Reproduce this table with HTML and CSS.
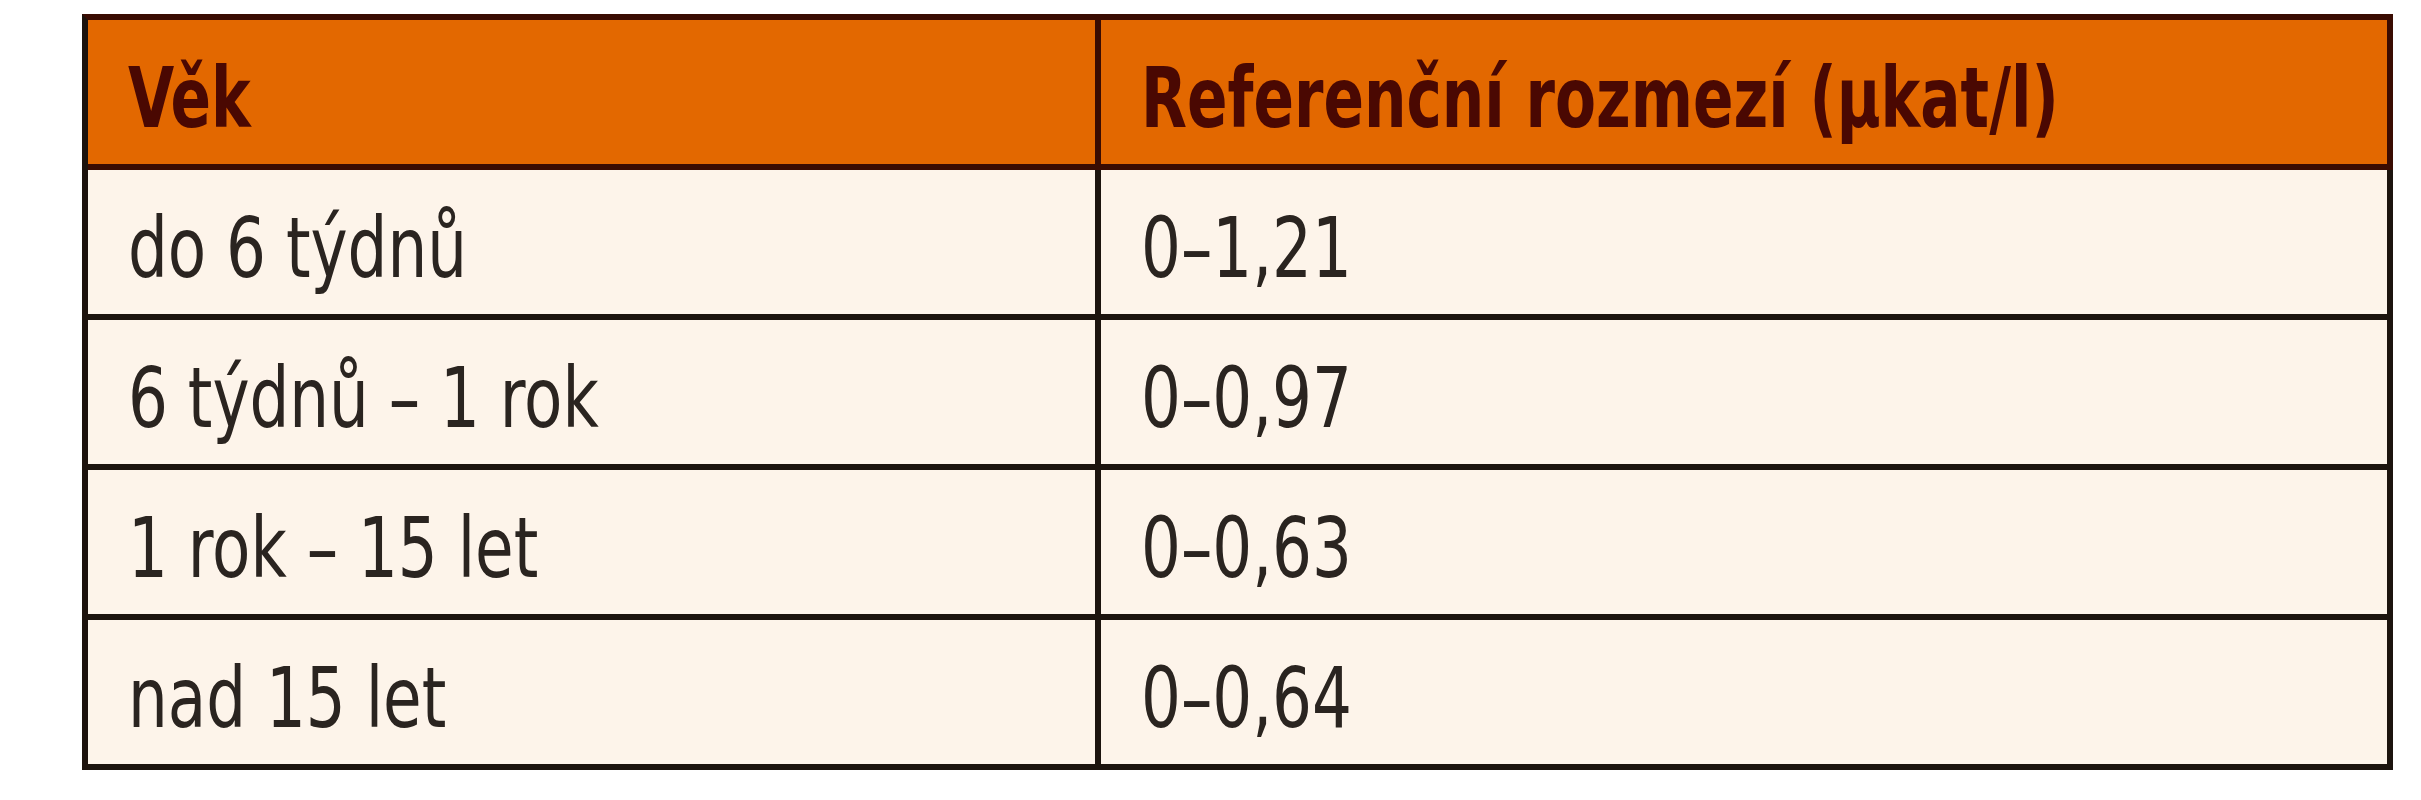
FILE: index.html
```html
<!DOCTYPE html>
<html lang="cs">
<head>
<meta charset="utf-8">
<title>Referenční rozmezí</title>
<link rel="stylesheet" href="styles.css">
</head>
<body>
<table class="ref-table">
  <thead>
    <tr>
      <th class="col-age"><span class="txt">Věk</span></th>
      <th class="col-range"><span class="txt">Referenční rozmezí (µkat/l)</span></th>
    </tr>
  </thead>
  <tbody>
    <tr><td class="col-age"><span class="txt">do 6 týdnů</span></td><td class="col-range"><span class="txt">0–1,21</span></td></tr>
    <tr><td class="col-age"><span class="txt">6 týdnů – 1 rok</span></td><td class="col-range"><span class="txt">0–0,97</span></td></tr>
    <tr><td class="col-age"><span class="txt">1 rok – 15 let</span></td><td class="col-range"><span class="txt">0–0,63</span></td></tr>
    <tr><td class="col-age"><span class="txt">nad 15 let</span></td><td class="col-range"><span class="txt">0–0,64</span></td></tr>
  </tbody>
</table>
</body>
</html>
```

FILE: styles.css
```css
html, body {
  margin: 0;
  padding: 0;
  background: #ffffff;
}

body {
  padding: 14px 0 0 82px;
  font-family: "Liberation Sans Narrow", "DejaVu Sans Condensed", "Liberation Sans", sans-serif;
}

.ref-table {
  table-layout: fixed;
  border-collapse: separate;
  border-spacing: 0;
  width: 2311px;
  border-left: 6px solid #1c120c;
  border-top: 6px solid #3a0c02;
  background: #fdf4ea;
}

.ref-table th,
.ref-table td {
  box-sizing: border-box;
  height: 150px;
  padding: 12px 0 0 40px;
  vertical-align: middle;
  text-align: left;
  font-size: 84px;
  line-height: 1;
  border-right: 6px solid #1c140e;
  border-bottom: 6px solid #1c140e;
  white-space: nowrap;
  overflow: hidden;
}

.ref-table .col-age {
  width: 1013px;
}

.ref-table .col-range {
  width: 1292px;
}

.ref-table th {
  background: #e36800;
  color: #4a0802;
  font-weight: bold;
  border-right-color: #3a0c02;
  border-bottom-color: #3a0c02;
}

.ref-table td {
  color: #2a2420;
  font-weight: normal;
}

.txt {
  display: inline-block;
  transform-origin: 0 50%;
  transform: scaleX(0.83);
}

.ref-table th .txt {
  transform: scaleX(0.79);
}
```
